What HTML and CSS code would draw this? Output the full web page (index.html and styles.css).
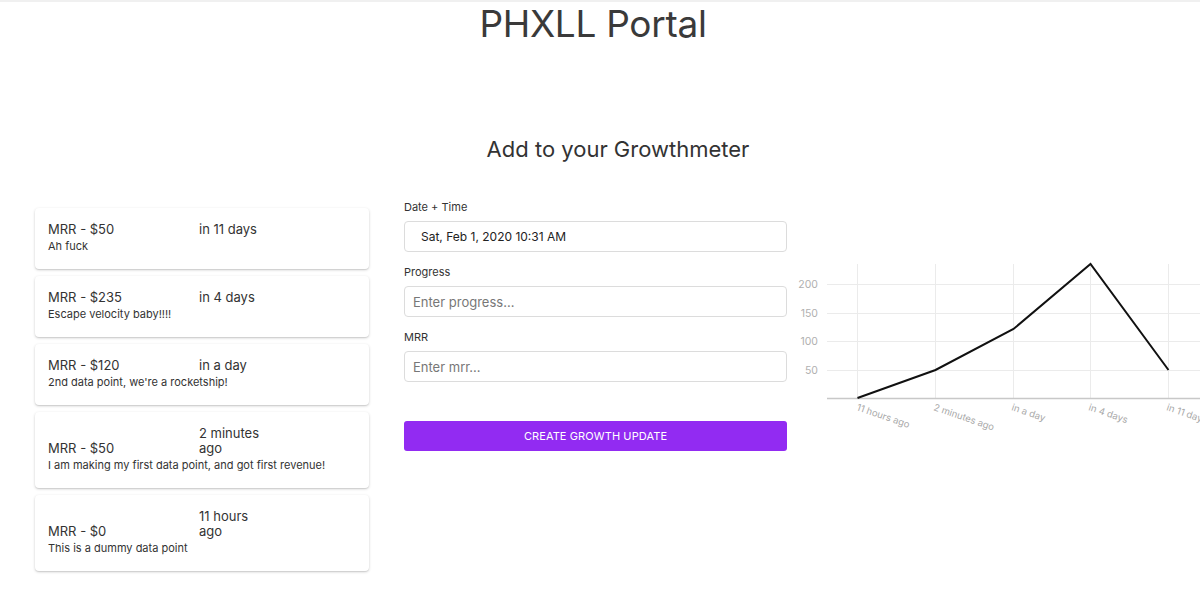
FILE: index.html
```html
<!DOCTYPE html>
<html lang="en">
<head>
<meta charset="utf-8">
<title>PHXLL Portal</title>
<link rel="stylesheet" href="styles.css">
</head>
<body>
<div class="topbar"></div>
<h1 class="title">PHXLL Portal</h1>
<section class="growth">
  <h2 class="subtitle">Add to your Growthmeter</h2>
  <div class="layout">
    <div class="cards">
      <div class="card">
        <div class="card-row"><span class="mrr">MRR - $50</span><span class="when">in 11 days</span></div>
        <div class="note">Ah fuck</div>
      </div>
      <div class="card">
        <div class="card-row"><span class="mrr">MRR - $235</span><span class="when">in 4 days</span></div>
        <div class="note">Escape velocity baby!!!!</div>
      </div>
      <div class="card">
        <div class="card-row"><span class="mrr">MRR - $120</span><span class="when">in a day</span></div>
        <div class="note">2nd data point, we're a rocketship!</div>
      </div>
      <div class="card">
        <div class="card-row"><span class="mrr">MRR - $50</span><span class="when">2 minutes ago</span></div>
        <div class="note">I am making my first data point, and got first revenue!</div>
      </div>
      <div class="card">
        <div class="card-row"><span class="mrr">MRR - $0</span><span class="when">11 hours ago</span></div>
        <div class="note">This is a dummy data point</div>
      </div>
    </div>

    <form class="form">
      <label class="label">Date + Time</label>
      <div class="input date">Sat, Feb 1, 2020 10:31 AM</div>
      <label class="label">Progress</label>
      <input class="input" type="text" placeholder="Enter progress...">
      <label class="label">MRR</label>
      <input class="input" type="text" placeholder="Enter mrr...">
      <button class="btn" type="button">CREATE GROWTH UPDATE</button>
    </form>

    <div class="chart">
      <svg width="404" height="190" viewBox="-4 0 404 190">
        <g stroke="#ebebeb" stroke-width="1">
          <line x1="56.5" y1="9" x2="56.5" y2="143"/>
          <line x1="134.5" y1="9" x2="134.5" y2="143"/>
          <line x1="212.5" y1="9" x2="212.5" y2="143"/>
          <line x1="289.5" y1="9" x2="289.5" y2="143"/>
          <line x1="367.5" y1="9" x2="367.5" y2="143"/>
          <line x1="26" y1="29.5" x2="400" y2="29.5"/>
          <line x1="26" y1="58.5" x2="400" y2="58.5"/>
          <line x1="26" y1="86.5" x2="400" y2="86.5"/>
          <line x1="26" y1="115.5" x2="400" y2="115.5"/>
        </g>
        <line x1="26" y1="143.5" x2="400" y2="143.5" stroke="#c8c8c8" stroke-width="1.5"/>
        <g class="ylab" text-anchor="end">
          <text x="17" y="33">200</text>
          <text x="17" y="62">150</text>
          <text x="17" y="90">100</text>
          <text x="17" y="119">50</text>
        </g>
        <polyline points="56.5,143 134.5,115 212.5,74 289.5,9 367.5,115" fill="none" stroke="#111" stroke-width="2" stroke-linejoin="miter"/>
        <g class="xlab">
          <text transform="translate(55 155) rotate(19)">11 hours ago</text>
          <text transform="translate(132 155) rotate(19)">2 minutes ago</text>
          <text transform="translate(210 155) rotate(19)">in a day</text>
          <text transform="translate(287 155) rotate(19)">in 4 days</text>
          <text transform="translate(365 155) rotate(19)">in 11 days</text>
        </g>
      </svg>
    </div>
  </div>
</section>
</body>
</html>
```

FILE: styles.css
```css
html, body {
  margin: 0;
  padding: 0;
  background: #fff;
  overflow: hidden;
}
body {
  font-family: Inter, "Noto Sans", "Liberation Sans", sans-serif;
  color: #333;
  width: 1200px;
  height: 602px;
}
.topbar {
  height: 2px;
  background: #f0f0f0;
}
.title {
  margin: 0 14px 0 0;
  padding-top: 0;
  font-size: 37px;
  line-height: 44px;
  font-weight: 400;
  text-align: center;
  color: #3a3a3a;
  letter-spacing: -0.3px;
}
.growth {
  width: 1166px;
  padding-left: 35px;
  margin-top: 88px;
}
.subtitle {
  margin: 0;
  font-size: 22px;
  line-height: 30px;
  font-weight: 400;
  text-align: center;
  color: #333;
}
.layout {
  display: flex;
  align-items: flex-start;
  margin-top: 30px;
}
.cards {
  width: 334px;
  display: flex;
  flex-direction: column;
  gap: 7px;
  margin-top: 14px;
}
.card {
  background: #fff;
  border-radius: 4px;
  box-shadow: 0 1px 3px rgba(0,0,0,0.18), 0 1px 1px rgba(0,0,0,0.08);
  padding: 14px 13px 16px;
}
.card-row {
  display: flex;
  align-items: flex-end;
}
.mrr {
  width: 151px;
  font-size: 13px;
  line-height: 15px;
  color: #333;
}
.when {
  width: 72px;
  font-size: 13px;
  line-height: 15px;
  color: #333;
}
.note {
  margin-top: 2px;
  font-size: 11px;
  line-height: 14px;
  color: #333;
}
.form {
  width: 383px;
  margin-left: 35px;
  display: flex;
  flex-direction: column;
  padding-top: 6px;
}
.label {
  font-size: 11px;
  line-height: 14px;
  color: #333;
  margin-bottom: 7px;
}
.input {
  box-sizing: border-box;
  height: 31px;
  border: 1px solid #dcdcdc;
  border-radius: 4px;
  padding: 0 8px;
  font-family: inherit;
  font-size: 13px;
  color: #333;
  background: #fff;
  margin-bottom: 13px;
  outline: none;
}
.input::placeholder {
  color: #777;
}
.date {
  display: flex;
  align-items: center;
  padding-left: 16px;
  font-size: 12px;
  color: #222;
}
.btn {
  margin-top: 26px;
  height: 30px;
  border: none;
  border-radius: 3px;
  background: #922bf2;
  color: #fff;
  font-family: inherit;
  font-size: 11px;
  letter-spacing: 0.1px;
  cursor: pointer;
}
.chart {
  margin-left: 10px;
  margin-top: 61px;
  width: 404px;
  overflow: hidden;
}
.chart svg {
  display: block;
  overflow: visible;
}
.ylab text {
  font-size: 10.5px;
  fill: #b0b0b0;
  font-family: Inter, "Noto Sans", sans-serif;
}
.xlab text {
  font-size: 9.5px;
  fill: #a8a8a8;
  font-family: Inter, "Noto Sans", sans-serif;
}
```
